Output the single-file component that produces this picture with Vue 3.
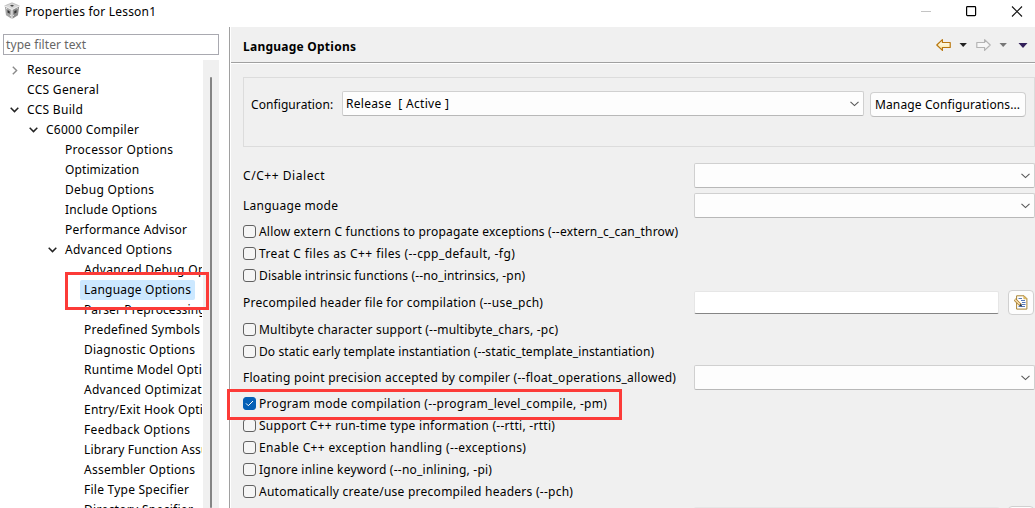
<script setup>
const tree = [
  { label: 'Resource', level: 0, state: 'closed', w: 54 },
  { label: 'CCS General', level: 0, w: 72 },
  { label: 'CCS Build', level: 0, state: 'open', w: 56 },
  { label: 'C6000 Compiler', level: 1, state: 'open', w: 93 },
  { label: 'Processor Options', level: 2, w: 108 },
  { label: 'Optimization', level: 2, w: 74 },
  { label: 'Debug Options', level: 2, w: 89 },
  { label: 'Include Options', level: 2, w: 92 },
  { label: 'Performance Advisor', level: 2, w: 122 },
  { label: 'Advanced Options', level: 2, state: 'open', w: 107 },
  { label: 'Advanced Debug Options', level: 3, w: 151 },
  { label: 'Language Options', level: 3, selected: true, w: 107 },
  { label: 'Parser Preprocessing Options', level: 3, w: 170 },
  { label: 'Predefined Symbols', level: 3, w: 116 },
  { label: 'Diagnostic Options', level: 3, w: 111 },
  { label: 'Runtime Model Options', level: 3, w: 139 },
  { label: 'Advanced Optimizations', level: 3, w: 142 },
  { label: 'Entry/Exit Hook Options', level: 3, w: 140 },
  { label: 'Feedback Options', level: 3, w: 106 },
  { label: 'Library Function Assumptions', level: 3, w: 172 },
  { label: 'Assembler Options', level: 3, w: 111 },
  { label: 'File Type Specifier', level: 3, w: 105 },
  { label: 'Directory Specifier', level: 3, w: 109 },
]

const options = [
  { type: 'combo', label: 'C/C++ Dialect', w: 82 },
  { type: 'combo', label: 'Language mode', w: 95 },
  { type: 'check', label: 'Allow extern C functions to propagate exceptions (--extern_c_can_throw)', w: 419 },
  { type: 'check', label: 'Treat C files as C++ files (--cpp_default, -fg)', w: 256 },
  { type: 'check', label: 'Disable intrinsic functions (--no_intrinsics, -pn)', w: 266 },
  { type: 'file', label: 'Precompiled header file for compilation (--use_pch)', w: 300 },
  { type: 'check', label: 'Multibyte character support (--multibyte_chars, -pc)', w: 299 },
  { type: 'check', label: 'Do static early template instantiation (--static_template_instantiation)', w: 395 },
  { type: 'combo', label: 'Floating point precision accepted by compiler (--float_operations_allowed)', w: 433 },
  { type: 'check', label: 'Program mode compilation (--program_level_compile, -pm)', checked: true, w: 348 },
  { type: 'check', label: 'Support C++ run-time type information (--rtti, -rtti)', w: 296 },
  { type: 'check', label: 'Enable C++ exception handling (--exceptions)', w: 267 },
  { type: 'check', label: 'Ignore inline keyword (--no_inlining, -pi)', w: 233 },
  { type: 'check', label: 'Automatically create/use precompiled headers (--pch)', w: 314 },
  { type: 'file', label: '', w: 0 },
]

// Tracks a label so that it fills its nominal width.
const vFit = {
  mounted(el, { value }) {
    if (!value) return
    const natural = el.getBoundingClientRect().width
    el.style.letterSpacing = (value + 0.2 - natural) / el.textContent.length + 'px'
  },
}
</script>

<template>
  <div class="window">
    <header class="titlebar">
      <svg class="cube" width="16" height="18" viewBox="0 0 16 18">
        <path d="M8 .8 15.2 3.8 8 7.6 .8 3.8z" fill="#d8d8d8" stroke="#a5a5a5" stroke-width=".6" />
        <path d="M.8 3.8 8 7.6V17L2 13.2z" fill="#a6a6a6" />
        <path d="M15.2 3.8 8 7.6V17l6-3.8z" fill="#8b8b8b" />
        <path d="M8 7.6V17M1 4l7 3.6L15 4" fill="none" stroke="#eee" stroke-width="1.2" />
        <path d="M6 3.6 8 2.8l2.2.9L8 4.8z" fill="#444" />
        <path d="m3.5 8 2.2 1.2v2.6L3.5 10.4zM12.5 8l-2.2 1.2v2.6l2.2-1.4z" fill="#333" />
        <path d="m2 6 1 .6M6 13l1 .7M13.8 6l-1 .6M10 13l-1 .7" stroke="#eee" />
      </svg>
      <span v-fit="131" class="title">Properties for Lesson1</span>
      <div class="controls">
        <svg width="110" height="14" viewBox="0 0 110 14" fill="none">
          <path d="M0 6.5h10" stroke="#c4c4c4" />
          <rect x="45.6" y="1.6" width="9" height="9" rx=".8" stroke="#000" stroke-width="1.2" />
          <path d="m91 1.5 10 10m0-10-10 10" stroke="#111" stroke-width="1.1" />
        </svg>
      </div>
    </header>

    <div class="body">
      <aside class="sidebar">
        <div class="filter"><span v-fit="80">type filter text</span></div>
        <div class="tree-wrap">
          <ul class="tree">
            <li v-for="n in tree" :key="n.label" :class="['l' + n.level, { selected: n.selected }]">
              <span class="twist">
                <svg v-if="n.state === 'open'" width="9" height="6" viewBox="0 0 9 6" fill="none"><path d="m.7.8 3.8 3.8L8.3.8" stroke="#222" stroke-width="1.5" /></svg>
                <svg v-else-if="n.state === 'closed'" width="6" height="9" viewBox="0 0 6 9" fill="none"><path d="m.8.7 3.8 3.8L.8 8.3" stroke="#8a8a8a" stroke-width="1.4" /></svg>
              </span>
              <span class="node"><span v-fit="n.w" class="txt">{{ n.label }}</span></span>
            </li>
          </ul>
          <div class="scroll"><div class="thumb"></div></div>
        </div>
      </aside>

      <main class="content">
        <div class="heading">
          <h1><span v-fit="113">Language Options</span></h1>
          <svg class="nav" width="94" height="14" viewBox="0 0 94 14">
            <defs>
              <linearGradient id="gold" x1="0" y1="0" x2="0" y2="1"><stop offset="0" stop-color="#fff" /><stop offset="1" stop-color="#fde79a" /></linearGradient>
            </defs>
            <path d="M.8 7 6.4 1.6v2.9h7.8v5H6.4v2.9z" fill="url(#gold)" stroke="#b9770e" stroke-width="1.2" stroke-linejoin="round" />
            <path d="M23.500 5h7.400l-3.700 4z" fill="#222" />
            <path d="M54.200 7 48.600 1.600v2.900h-7.800v5h7.800v2.900z" fill="#f7f7f7" stroke="#b4b4b4" stroke-width="1.2" stroke-linejoin="round" />
            <path d="M63.500 5h7.400l-3.700 4z" fill="#777" />
            <path d="M82.500 5h9l-4.500 5z" fill="#32205a" />
          </svg>
        </div>

        <div class="panel">
          <section class="config">
            <span class="config-label"><span v-fit="82">Configuration:</span></span>
            <div class="combo"><span v-fit="103" class="value">Release&nbsp; [ Active ]</span>
              <svg class="chev" width="9" height="6" viewBox="0 0 9 6" fill="none"><path d="m.5.8 4 3.8 4-3.8" stroke="#555" stroke-width="1.1" /></svg>
            </div>
            <button class="manage"><span v-fit="145">Manage Configurations...</span></button>
          </section>

          <div class="options">
            <div v-for="(o, i) in options" :key="i" :class="['row', 'row-' + o.type]">
              <span v-if="o.type === 'check'" :class="['box', { on: o.checked }]">
                <svg v-if="o.checked" width="9" height="7" viewBox="0 0 9 7" fill="none"><path d="m1 3.4 2.3 2.3L8 1" stroke="#fff" stroke-width="1" /></svg>
              </span>
              <span class="label"><span v-fit="o.w" class="txt">{{ o.label }}</span></span>
              <div v-if="o.type === 'combo'" class="combo">
                <svg class="chev" width="9" height="6" viewBox="0 0 9 6" fill="none"><path d="m.5.8 4 3.8 4-3.8" stroke="#555" stroke-width="1.1" /></svg>
              </div>
              <template v-if="o.type === 'file'">
                <div class="input"></div>
                <button class="edit">
                  <svg width="14" height="15" viewBox="0 0 14 15">
                    <path d="M2.600.8h7.500l2.800 2.800v10.500H2.600z" fill="#fff" stroke="#a88432" stroke-width="1" />
                    <path d="M9.800.8v3h3z" fill="#e8c46d" stroke="#c39a3c" stroke-width=".6" />
                    <path d="M4.500 3.500h3.500M7 5.500h4M8 7.500h3.500M8 9.500h3.500M4.500 11.500H11" stroke="#5579b8" />
                    <path d="m.8 4.400 5.400 5.400" stroke="#a27421" stroke-width="3" />
                    <path d="m1 4.600 4.800 4.800" stroke="#f3d9a6" stroke-width="1.700" />
                    <path d="m5 10.800 2.200-2.300 1 3z" fill="#283547" />
                  </svg>
                </button>
              </template>
            </div>
          </div>
        </div>
      </main>
    </div>

    <div class="mark mark-tree"></div>
    <div class="mark mark-option"></div>
  </div>
</template>

<style>
html, body { margin: 0; overflow: hidden; }
</style>

<style scoped>
.window {
  position: relative;
  width: 1035px;
  height: 508px;
  overflow: hidden;
  display: flex;
  flex-direction: column;
  background: #fff;
  color: #000;
  font: 12px/18px "Noto Sans", "Open Sans", sans-serif;
  white-space: nowrap;
}
.window * { box-sizing: border-box; }
svg { display: block; flex: none; }
button { font: inherit; color: inherit; padding: 0; }

.titlebar { flex: none; height: 27px; display: flex; align-items: flex-start; padding: 2px 12px 0 4px; }
.title { margin: 1px 0 0 5px; }
.controls { margin: 3px 0 0 auto; width: 102px; }

.body { flex: 1; min-height: 0; display: flex; }
.sidebar { flex: none; width: 230px; padding: 7px 10px 0 3px; border-right: 1px solid #a0a0a0; display: flex; flex-direction: column; }
.filter { flex: none; height: 21px; width: 216px; border: 1px solid #a9a9b0; padding: 0 2px; line-height: 19px; color: #666; }
.tree-wrap { flex: 1; min-height: 0; display: flex; margin-top: 5px; width: 216px; }
.tree { flex: 1; min-width: 0; overflow: hidden; margin: 0 1px 0 0; padding: 0; list-style: none; }
.tree li { height: 20px; display: flex; align-items: center; }
.l1 { padding-left: 19px; }
.l2 { padding-left: 38px; }
.l3 { padding-left: 57px; }
.twist { flex: none; width: 20px; height: 20px; display: flex; align-items: center; justify-content: center; padding-left: 2px; }
.l0 .twist { padding-left: 3px; }
.node { flex: none; height: 20px; padding: 0 4px; line-height: 19px; border-radius: 2px; }
.selected .node { background: #cce8ff; }
.scroll { flex: none; width: 16px; background: #f0f0f0; padding: 17px 7px 0; }
.thumb { width: 2px; height: 100%; background: #858585; border-radius: 1px; }

.content { flex: 1; min-width: 0; background: #f0f0f0; border-left: 1px solid #fff; display: flex; flex-direction: column; }
.heading { flex: none; height: 37px; border-bottom: 1px solid #fff; box-shadow: inset 0 -1px #a0a0a0; display: flex; align-items: center; justify-content: space-between; padding: 0 5px 0 12px; }
h1 { margin: 0; font-size: 12px; line-height: 18px; font-weight: 700; padding-top: 4px; }
.nav { margin-top: 0; }
.panel { flex: 1; padding: 13px 0 0 12px; }
.config { height: 70px; border: 1px solid #dcdcdc; display: flex; align-items: flex-start; padding: 13px 8px 0 7px; }
.config-label { flex: none; width: 91px; line-height: 27px; }
.combo { height: 25px; background: #fdfdfd; border: 1px solid #d0d0d0; border-bottom-color: #b8b8b8; border-radius: 2px; display: flex; align-items: center; padding: 0 4px 0 3px; }
.config .combo { width: 522px; }
.chev { margin-left: auto; }
.manage { width: 156px; height: 25px; margin: 1px 0 0 6px; text-align: left; padding-left: 4px; background: #fdfdfd; border: 1px solid #d0d0d0; border-bottom-color: #bcbcbc; border-radius: 4px; }

.options { display: flex; flex-direction: column; gap: 4px; margin-top: 16px; }
.row { flex: none; height: 18px; display: flex; align-items: center; }
.row-combo { height: 26px; align-items: flex-start; }
.row-file { height: 28px; }
.row-combo .label, .row-file .label { width: 451px; }
.row-combo .label { line-height: 26px; }
.label { flex: none; line-height: 18px; }
.row .combo { flex: 1; }
.box { flex: none; width: 13px; height: 13px; margin: 0 3px 1px 0; border: 1px solid #626262; border-radius: 3px; background: #f5f5f5; display: flex; align-items: center; justify-content: center; }
.box.on { background: #0560b6; border-color: #0560b6; }
.input { width: 305px; height: 23px; margin-bottom: 1px; background: #fff; border: 1px solid #e6e6e6; border-bottom-color: #858585; border-radius: 2px; }
.edit { width: 26px; height: 25px; margin: 0 0 1px 9px; background: #fdfdfd; border: 1px solid #d0d0d0; border-radius: 4px; display: flex; align-items: center; justify-content: center; }

.mark { position: absolute; border: 3px solid #fc3b38; }
.mark-tree { left: 65px; top: 272px; width: 144px; height: 38px; }
.mark-option { left: 227px; top: 389px; width: 395px; height: 31px; }
</style>
